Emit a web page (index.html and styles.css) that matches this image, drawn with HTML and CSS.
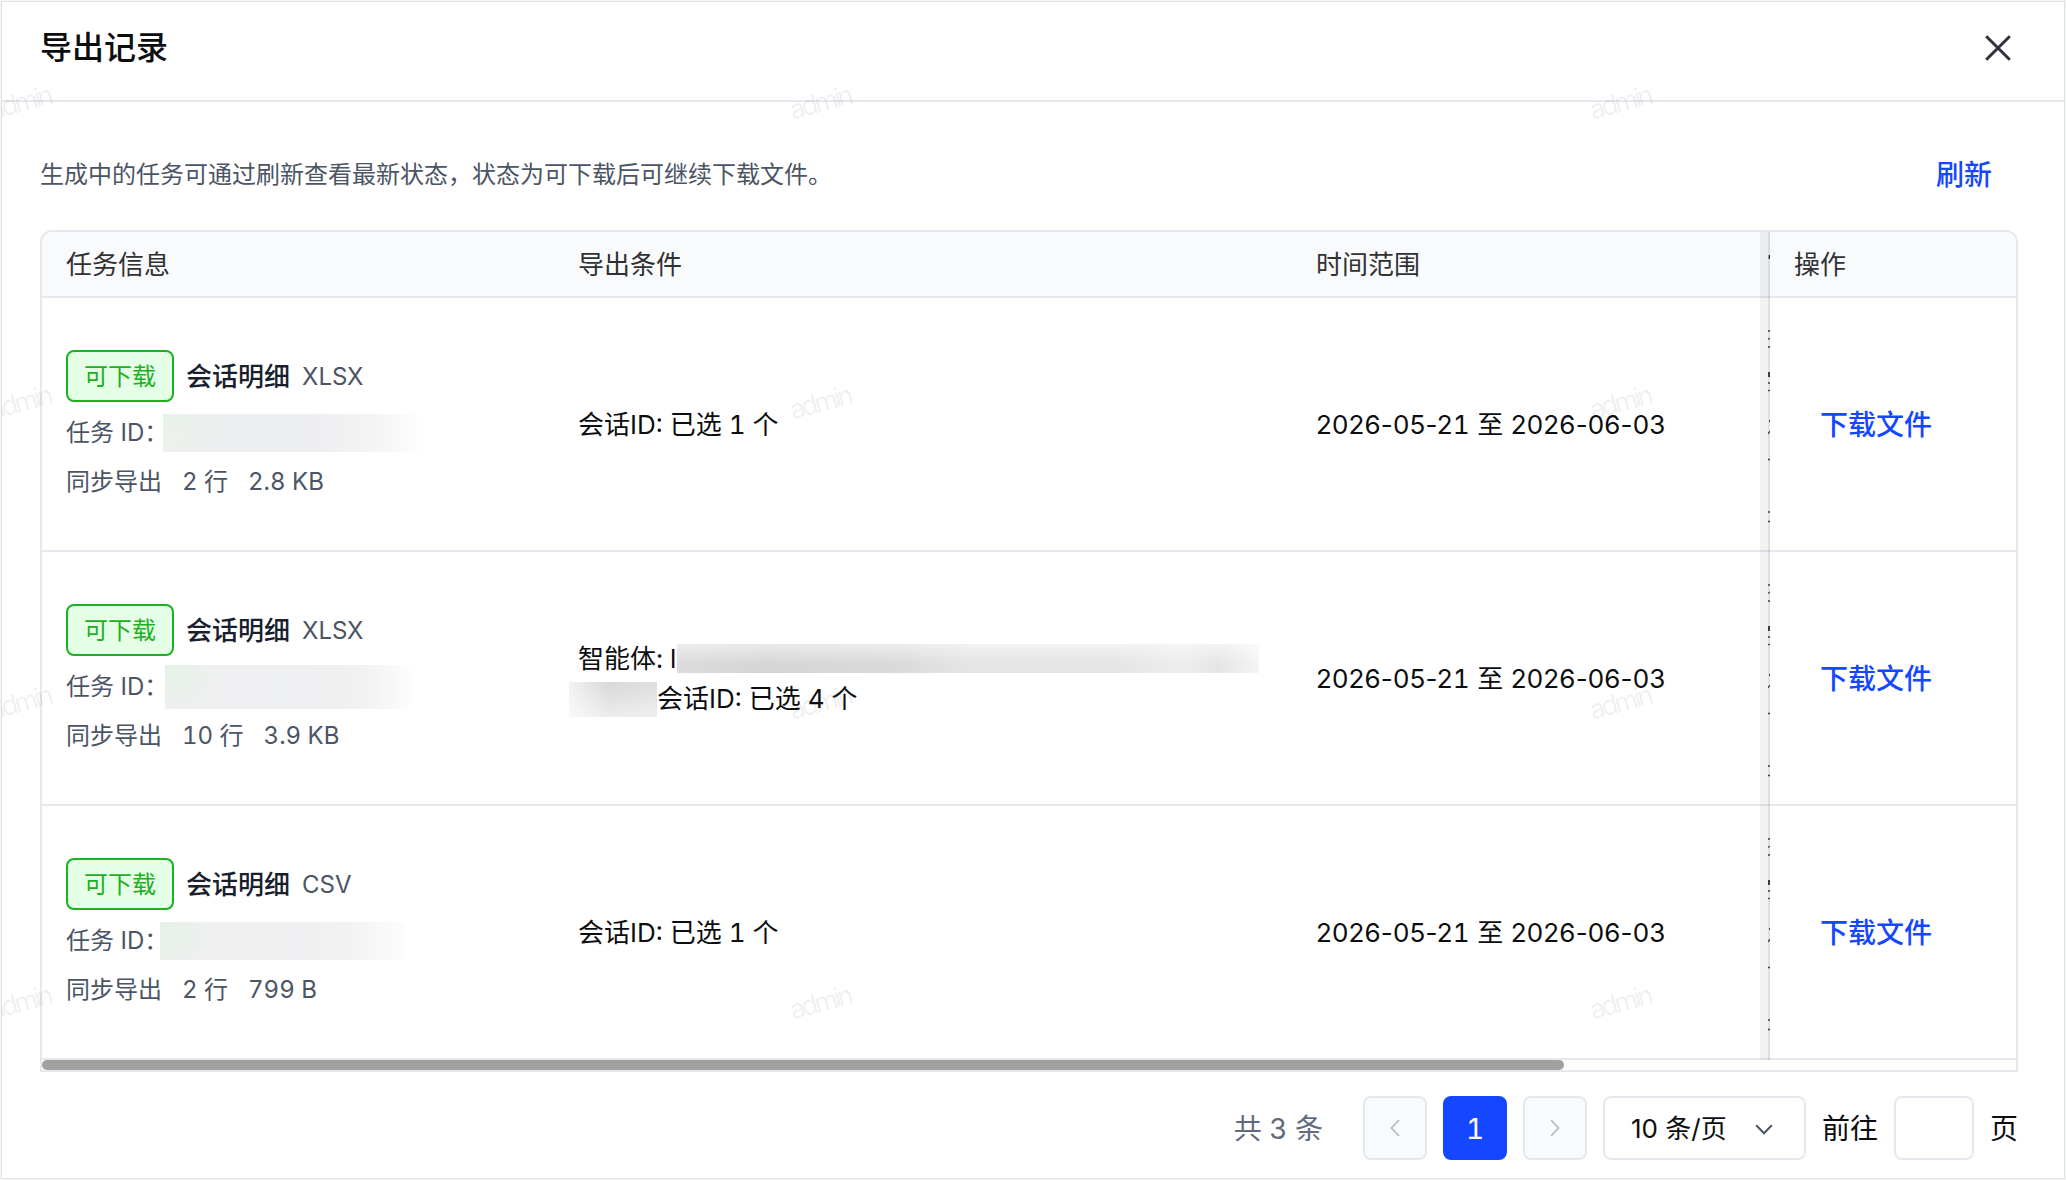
FILE: index.html
```html
<!DOCTYPE html>
<html lang="zh-CN">
<head>
<meta charset="utf-8">
<title>导出记录</title>
<link rel="stylesheet" href="styles.css">
</head>
<body>
<svg class="defs" aria-hidden="true">
  <symbol id="clipped" viewBox="0 0 2 252">
    <path d="M0 33h2M0 41.5L2 40M0 49h2M0 85h2M0 93l2-1M0 136l2-3M0 161.500h2M0 214h2M0 223.500h2" stroke="#3d4654" stroke-width="1.3" fill="none"/>
    <path d="M0 74h2v5H0zM1 122h1v2H1z" fill="#3d4654"/>
  </symbol>
</svg>
<div class="dialog">
  <header class="dialog-header">
    <h1 class="title">导出记录</h1>
    <svg class="close" viewBox="0 0 26 26"><path d="M1.200 1.200L24.800 24.800M24.800 1.200L1.200 24.800"/></svg>
  </header>
  <main class="content">
    <div class="toolbar">
      <p class="hint">生成中的任务可通过刷新查看最新状态，状态为可下载后可继续下载文件。</p>
      <a class="link refresh">刷新</a>
    </div>
    <div class="table">
      <div class="row head">
        <div class="cell">任务信息</div>
        <div class="cell">导出条件</div>
        <div class="cell">时间范围</div>
        <div class="cell peek"><svg class="peek-head" viewBox="0 0 2 64"><path d="M.6 23h1.400v4H.6z" fill="#303133"/></svg></div>
        <div class="cell">操作</div>
      </div>
      <div class="row">
        <div class="cell task">
          <div class="task-name"><span class="tag">可下载</span><strong>会话明细</strong><span>XLSX</span></div>
          <div class="task-id"><span>任务 ID：</span><i class="mask id-a"></i></div>
          <div class="task-meta"><span>同步导出</span><span>2 行</span><span>2.8 KB</span></div>
        </div>
        <div class="cell"><div class="line">会话ID: 已选 1 个</div></div>
        <div class="cell date"><div>2026-05-2<span class="tabular">1</span> 至 2026-06-03</div></div>
        <div class="cell peek"><svg class="peek-body"><use href="#clipped"/></svg></div>
        <div class="cell action"><a class="link">下载文件</a></div>
      </div>
      <div class="row">
        <div class="cell task">
          <div class="task-name"><span class="tag">可下载</span><strong>会话明细</strong><span>XLSX</span></div>
          <div class="task-id"><span>任务 ID：</span><i class="mask id-b"></i></div>
          <div class="task-meta"><span>同步导出</span><span>10 行</span><span>3.9 KB</span></div>
        </div>
        <div class="cell">
          <div class="line"><span class="agent">智能体: l</span><i class="mask agent-a"></i></div>
          <div class="line"><i class="mask agent-b"></i><span>会话ID: 已选 4 个</span></div>
        </div>
        <div class="cell date"><div>2026-05-2<span class="tabular">1</span> 至 2026-06-03</div></div>
        <div class="cell peek"><svg class="peek-body"><use href="#clipped"/></svg></div>
        <div class="cell action"><a class="link">下载文件</a></div>
      </div>
      <div class="row">
        <div class="cell task">
          <div class="task-name"><span class="tag">可下载</span><strong>会话明细</strong><span>CSV</span></div>
          <div class="task-id"><span>任务 ID：</span><i class="mask id-c"></i></div>
          <div class="task-meta"><span>同步导出</span><span>2 行</span><span>799 B</span></div>
        </div>
        <div class="cell"><div class="line">会话ID: 已选 1 个</div></div>
        <div class="cell date"><div>2026-05-2<span class="tabular">1</span> 至 2026-06-03</div></div>
        <div class="cell peek"><svg class="peek-body"><use href="#clipped"/></svg></div>
        <div class="cell action"><a class="link">下载文件</a></div>
      </div>
      <div class="scrollbar"><div class="thumb"></div></div>
      <div class="fixed-shadow"></div>
    </div>
    <nav class="pagination">
      <span class="total">共 3 条</span>
      <button class="page disabled"><svg viewBox="0 0 10 18"><path d="M9 1L1.500 9L9 17"/></svg></button>
      <button class="page active">1</button>
      <button class="page disabled"><svg viewBox="0 0 10 18"><path d="M1 1L8.500 9L1 17"/></svg></button>
      <div class="select"><span>10 条/页</span><svg viewBox="0 0 18 11"><path d="M1.200 1.200L9 9.200L16.800 1.200"/></svg></div>
      <span class="goto">前往</span>
      <div class="jump"></div>
      <span>页</span>
    </nav>
  </main>
</div>
<div class="watermarks">
  <span>admin</span><span>admin</span><span>admin</span>
  <span>admin</span><span>admin</span><span>admin</span>
  <span>admin</span><span>admin</span><span>admin</span>
  <span>admin</span><span>admin</span><span>admin</span>
</div>
</body>
</html>
```
FILE: styles.css
```css
* { box-sizing: border-box; }

body {
  margin: 0;
  padding: 1px;
  width: 2066px;
  height: 1180px;
  overflow: hidden;
  background: #f6f6f6;
  color: #0c0d0f;
  font: 400 26px/40px Inter, "Noto Sans CJK SC", sans-serif;
  font-feature-settings: "tnum";
}

.defs { position: absolute; width: 0; height: 0; }

.dialog {
  height: 1178px;
  border: 1px solid #dfe0e1;
  background: #fff;
}

.dialog-header {
  display: flex;
  align-items: center;
  justify-content: space-between;
  height: 100px;
  padding: 0 53px 6px 38px;
  border-bottom: 2px solid #e5e9ef;
}

.title { margin: 0; font-size: 32px; font-weight: 500; line-height: 48px; }
.close { width: 26px; height: 26px; fill: none; stroke: #30333d; stroke-width: 3; }

.content { padding: 40px 46px 0 38px; }

.toolbar {
  display: flex;
  align-items: center;
  justify-content: space-between;
  height: 64px;
  margin-bottom: 24px;
  padding: 1px 26px 0 0;
}

.hint { margin: 0; color: #4b5565; font-size: 24px; }
.link { color: #1447ff; font-size: 28px; font-weight: 500; }

.table {
  position: relative;
  height: 842px;
  border: 2px solid #e5e9ee;
  border-radius: 12px 12px 0 0;
  overflow: hidden;
}

.row {
  display: grid;
  grid-template-columns: 512px 738px 452px 26px 246px;
  height: 254px;
  border-bottom: 2px solid #e5e9ee;
}

.row.head { height: 66px; background: #f9fafc; color: #303133; }

.cell {
  display: flex;
  flex-direction: column;
  justify-content: center;
  padding: 2px 0 0 24px;
  white-space: nowrap;
}

.date { font-feature-settings: normal; letter-spacing: 0.15px; }
.tabular { font-feature-settings: "tnum"; }
.action { padding-left: 50px; }
.peek { padding-top: 0; }
.peek-head { width: 2px; height: 64px; }
.peek-body { width: 2px; height: 252px; }

.task { padding-top: 8px; color: #4b5565; font-size: 24px; }
.task-name { display: flex; align-items: center; gap: 12px; height: 52px; }
.task-name strong { color: #17202c; font-size: 26px; font-weight: 500; }
.task-name > :not(.tag) { padding-top: 2px; }

.tag {
  height: 52px;
  padding: 1px 16px 0;
  border: 2px solid #1eb023;
  border-radius: 8px;
  background: #e5ffe6;
  color: #1eb023;
  line-height: 48px;
}

.task-id { display: flex; align-items: center; height: 48px; margin-top: 7px; }
.task-id span { width: 96px; }
.task-meta { display: flex; gap: 20px; height: 49px; line-height: 49px; }

.line { display: flex; align-items: center; height: 40px; }
.agent { width: 99px; }

.mask { flex: none; display: block; }
.id-a { width: 262px; height: 38px; margin-left: 1px; background: radial-gradient(circle at 0 0, #e8f2e8, transparent 60px), linear-gradient(90deg, #f0f1f1, #edeef0 20% 55%, #f3f3f4 78%, #fff); }
.id-b { width: 244px; height: 44px; margin-left: 3px; background: radial-gradient(circle at 0 0, #e5f2e6, transparent 60px), linear-gradient(90deg, #f0f0f1, #eeeff1 50%, #f1f1f2 80%, #fcfcfc); }
.id-c { width: 246px; height: 38px; margin-left: -2px; background: radial-gradient(circle at 0 0, #e5f2e6, transparent 60px), linear-gradient(90deg, #f0f0f1, #efeff1 55%, #f3f3f4 80%, #fdfdfd); }
.agent-a { width: 582px; height: 29px; margin-top: -2px; background: linear-gradient(180deg, rgba(255,255,255,.5), transparent 70%), linear-gradient(90deg, #dcdcdc, #d5d5d5 15%, #dadada 38%, #e5e5e5 50%, #e5e5e5 75%, #ededed 87%, #e5e5e5 93%, #f5f5f5); }
.agent-b { width: 88px; height: 35px; margin-left: -9px; background: linear-gradient(0deg, rgba(255,255,255,.5), transparent 90%), linear-gradient(90deg, #f3f3f3, #dadada 45%, #e0e0e0); }

.scrollbar { height: 10px; }
.thumb { width: 1522px; height: 10px; border-radius: 5px; background: #a1a1a1; }

/* shade cast by the pinned action column over the scrolled ones */
.fixed-shadow {
  position: absolute;
  top: 0;
  left: 1718px;
  width: 10px;
  height: 828px;
  border-right: 2px solid rgba(0, 0, 0, .12);
  background: rgba(0, 0, 0, .055);
  background-clip: padding-box;
}

.pagination {
  display: flex;
  align-items: center;
  justify-content: flex-end;
  gap: 16px;
  margin-top: 24px;
  font-size: 28px;
}

.pagination > span { padding-top: 2px; }
.total { margin-right: 24px; color: #606b7b; }

.page {
  display: flex;
  align-items: center;
  justify-content: center;
  width: 64px;
  height: 64px;
  padding: 0;
  border: 2px solid #e5e9ee;
  border-radius: 8px;
  background: #f9fafc;
  font: inherit;
}

.page.active { padding-top: 1px; border-color: #1447ff; background: #1447ff; color: #fff; }
.page svg { width: 10px; height: 18px; fill: none; stroke: #b4bac5; stroke-width: 1.8; }

.select {
  display: flex;
  align-items: center;
  justify-content: space-between;
  width: 203px;
  height: 64px;
  padding: 2px 31px 0 26px;
  border: 2px solid #e5e9ee;
  border-radius: 8px;
  font-size: 26px;
}

.select span { font-feature-settings: normal; }
.select svg { width: 18px; height: 11px; fill: none; stroke: #4b5565; stroke-width: 2; }
.jump { width: 80px; height: 64px; border: 2px solid #e5e9ee; border-radius: 8px; }

/* repeated overlay above the whole dialog */
.watermarks {
  position: absolute;
  inset: 0 2px 0 2px;
  display: grid;
  grid-template-columns: 800px 800px 100px;
  grid-template-rows: 300px 300px 300px 60px;
  padding-top: 83px;
  overflow: hidden;
  pointer-events: none;
}

.watermarks span {
  width: 66px;
  height: 40px;
  margin-left: -15px;
  color: rgba(0, 0, 0, .065);
  font-size: 27px;
  font-weight: 400;
  letter-spacing: -3.2px;
  text-align: center;
  transform: rotate(-15deg);
}
```
